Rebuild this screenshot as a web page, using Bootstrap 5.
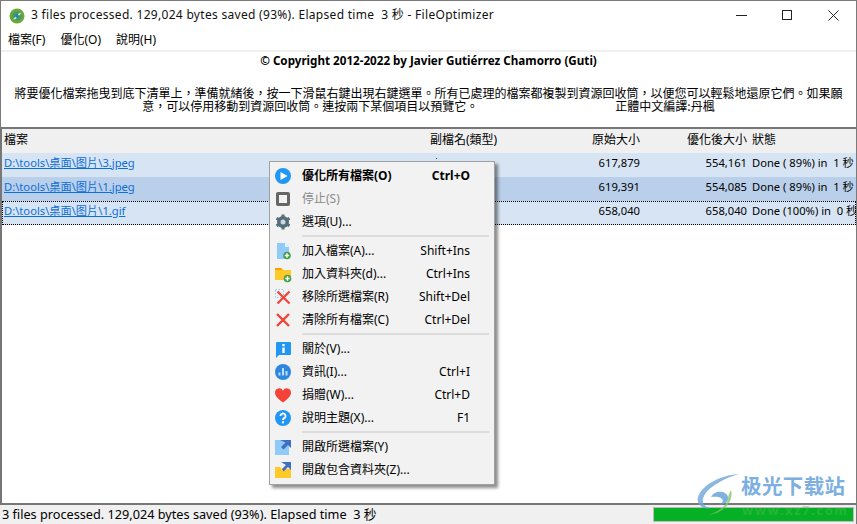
<!DOCTYPE html>
<html lang="zh-Hant">
<head>
<meta charset="utf-8">
<title>FileOptimizer</title>
<link href="https://cdn.jsdelivr.net/npm/bootstrap@5.3.0/dist/css/bootstrap.min.css" rel="stylesheet">
<style>
html,body{height:100%;margin:0;overflow:hidden;background:#fff}
body{font-family:"Noto Sans","Noto Sans CJK TC",sans-serif;font-size:11px;color:#000;line-height:1.2}
.win{height:524px;width:857px;border:1px solid #7a7a7a;border-bottom:0;position:relative;background:#fff}
.titlebar{height:29px;font-size:12px;padding-left:8px;gap:6px;color:#111}
.titlebar .ttl{letter-spacing:.3px;white-space:pre}
.winbtns{margin-left:auto}
.winbtn{width:46px;height:29px}
.menubar{height:20px;padding-left:7px;gap:15px;font-size:12px;border-bottom:2px solid #f0f0f0;box-sizing:content-box}
.notice{height:77px;border-bottom:2px solid #777;text-align:center;color:#000}
.copy{font-weight:700;padding-top:2px;height:28px;font-size:11.65px;line-height:14px}
.para{font-family:"Noto Sans CJK TC",sans-serif;font-size:12px;line-height:13px;white-space:pre;padding-top:6px}
.listwrap{border-left:2px solid #777;margin-left:-1px}
.hdr{height:24px;background:#f0f0f0;font-size:12px;padding-bottom:2px}
.hdr,.frow{display:grid;grid-template-columns:428px 110px 100px 107px 1fr;align-items:center}
.hdr>div:first-child,.frow>div:first-child{padding-left:2px}
.num{text-align:right}
.last{padding-left:5px;white-space:pre}
.frow .last{overflow:hidden}
.frow{height:24px;background:#d6e4f3;padding-bottom:5px;font-size:11.2px}
.frow.sel{background:#b9cfea}
.frow.foc{outline:1px dotted #000;outline-offset:-1px}
.frow a{color:#0d6fd8}
.jdot{width:1px;height:1px;background:#1a3a6a;align-self:start;margin:5px 0 0 6px}
.gap-fill{flex:1}
.statusline{height:21px;border-top:2px solid #777;background:#f0f0f0;padding-left:2px;font-size:12.7px;position:relative;z-index:1;margin-left:-1px}
.stxt{white-space:pre}
.gauge{width:201px;height:15px;margin-left:auto;margin-right:2px;border:1px solid #bcbcbc;background:#06b025}
.ctx{position:absolute;left:268px;top:160px;width:226px;height:324px;background:#f2f2f2;border:1px solid #a0a0a0;box-shadow:3px 3px 3px rgba(0,0,0,.45);padding:2px 0;z-index:5;display:block;border-radius:0;min-width:0;margin:0;font-size:12px;color:#000}
.ctx .mi{height:23px;padding:2px 24px 0 4px;display:flex;align-items:center;color:#000;white-space:nowrap}
.ctx .mi .ic{width:18px;height:18px;margin:-2px 10px 0 0;flex:none;display:block}
.ctx .mi.b{font-weight:700}
.ctx .mi.dis{color:#8a8a8a}
.ctx .mi .sc{margin-left:auto}
.ctx .sep{height:6px;margin:0 5px 0 32px}
.ctx .sep::after{content:"";display:block;position:relative;top:2px;height:2px;background:#dcdcdc}
.wm{position:absolute;left:696px;top:472px;z-index:3;pointer-events:none}
.wmt{position:absolute;left:740px;top:473px;z-index:3;font-family:"Noto Sans CJK SC",sans-serif;font-weight:700;font-size:20.500px;line-height:22px;color:#7db0e0;letter-spacing:.4px;white-space:nowrap}
.wmu{position:absolute;left:741px;top:503px;z-index:3;font-weight:700;font-size:13px;line-height:13px;color:rgba(90,190,90,.4);white-space:nowrap;letter-spacing:1.6px}
</style>
</head>
<body>
<div class="win d-flex flex-column">
  <div class="titlebar d-flex align-items-center">
    <svg width="16" height="16" viewBox="0 0 16 16"><circle cx="8" cy="8" r="7.500" fill="#6aa83a"/><circle cx="8" cy="8" r="4.600" fill="#3f9a74"/><path d="M4.500 10.500 11 4.500l1 1.200-6.200 6z" fill="#cfe9c0"/><circle cx="8" cy="8" r="1.800" fill="#2f7f99"/></svg>
    <span class="ttl">3 files processed. 129,024 bytes saved (93%). Elapsed time  3 秒 - FileOptimizer</span>
    <div class="winbtns d-flex">
      <div class="winbtn d-flex align-items-center justify-content-center"><svg width="11" height="11"><path d="M0 5.500h11" stroke="#222"/></svg></div>
      <div class="winbtn d-flex align-items-center justify-content-center"><svg width="11" height="11"><rect x=".5" y=".5" width="9" height="9" fill="none" stroke="#222"/></svg></div>
      <div class="winbtn d-flex align-items-center justify-content-center"><svg width="11" height="11"><path d="M.5.5l10 10M10.500.5l-10 10" stroke="#222"/></svg></div>
    </div>
  </div>
  <div class="menubar d-flex align-items-center"><span>檔案(F)</span><span>優化(O)</span><span>說明(H)</span></div>
  <div class="notice">
    <div class="copy">© Copyright 2012-2022 by Javier Gutiérrez Chamorro (Guti)</div>
    <div class="para">將要優化檔案拖曳到底下清單上，準備就緒後，按一下滑鼠右鍵出現右鍵選單。所有已處理的檔案都複製到資源回收筒，以便您可以輕鬆地還原它們。如果願
意，可以停用移動到資源回收筒。連按兩下某個項目以預覽它。                                                   正體中文編譯:丹楓</div>
  </div>
  <div class="listwrap">
    <div class="hdr"><div>檔案</div><div>副檔名(類型)</div><div class="num">原始大小</div><div class="num">優化後大小</div><div class="last">狀態</div></div>
  </div>
  <div class="gap-fill listwrap">
    <div class="frow"><div><a href="#">D:\tools\桌面\图片\3.jpeg</a></div><div class="jdot"></div><div class="num">617,879</div><div class="num">554,161</div><div class="last">Done ( 89%) in  1 秒</div></div>
    <div class="frow sel"><div><a href="#">D:\tools\桌面\图片\1.jpeg</a></div><div></div><div class="num">619,391</div><div class="num">554,085</div><div class="last">Done ( 89%) in  1 秒</div></div>
    <div class="frow foc"><div><a href="#">D:\tools\桌面\图片\1.gif</a></div><div></div><div class="num">658,040</div><div class="num">658,040</div><div class="last">Done (100%) in  0 秒</div></div>
  </div>
  <div class="statusline d-flex align-items-center">
    <span class="stxt">3 files processed. 129,024 bytes saved (93%). Elapsed time  3 秒</span>
    <div class="gauge"></div>
  </div>

  <div class="ctx dropdown-menu show">
    <div class="mi b"><svg class="ic" viewBox="0 0 18 18"><circle cx="9" cy="9" r="8" fill="#2196f3"/><path d="M6.500 5v8l7-4z" fill="#fff"/></svg>優化所有檔案(O)<span class="sc">Ctrl+O</span></div>
    <div class="mi dis"><svg class="ic" viewBox="0 0 18 18"><rect x="2" y="2" width="14" height="14" rx="2" fill="#666"/><rect x="5" y="5" width="8" height="8" fill="#f2f2f2"/></svg>停止(S)</div>
    <div class="mi"><svg class="ic" viewBox="0 0 18 18"><g fill="#546e7a"><circle cx="9" cy="9" r="6"/><g stroke="#546e7a" stroke-width="3"><path d="M9 1.500v15M2.500 5.250l13 7.500M2.500 12.750l13-7.500"/></g></g><circle cx="9" cy="9" r="2.500" fill="#cfd8dc"/></svg>選項(U)...</div>
    <div class="sep"></div>
    <div class="mi"><svg class="ic" viewBox="0 0 18 18"><path d="M3 1h8l4 4v12H3z" fill="#90caf9"/><path d="M11 1l4 4h-4z" fill="#e3f2fd"/><circle cx="13" cy="13.500" r="3.800" fill="#43a047"/><path d="M13 11.300v4.400M10.800 13.500h4.400" stroke="#fff" stroke-width="1.400"/></svg>加入檔案(A)...<span class="sc">Shift+Ins</span></div>
    <div class="mi"><svg class="ic" viewBox="0 0 18 18"><path d="M1 3h6l2 2h8v10H1z" fill="#ffca28"/><path d="M1 3h6l2 2H1z" fill="#ffa000"/><circle cx="13.500" cy="13.500" r="3.800" fill="#43a047"/><path d="M13.500 11.300v4.400M11.300 13.500h4.400" stroke="#fff" stroke-width="1.400"/></svg>加入資料夾(d)...<span class="sc">Ctrl+Ins</span></div>
    <div class="mi"><svg class="ic" viewBox="0 0 18 18"><rect x="1.500" y="1.500" width="8" height="8" fill="none" stroke="#90caf9" stroke-dasharray="1.500 1.500"/><path d="M3.500 3.500l12 12M15.500 3.500l-12 12" stroke="#f44336" stroke-width="2.200"/></svg>移除所選檔案(R)<span class="sc">Shift+Del</span></div>
    <div class="mi"><svg class="ic" viewBox="0 0 18 18"><path d="M3 3l12 12M15 3L3 15" stroke="#f44336" stroke-width="2.400"/></svg>清除所有檔案(C)<span class="sc">Ctrl+Del</span></div>
    <div class="sep"></div>
    <div class="mi"><svg class="ic" viewBox="0 0 18 18"><path d="M2 3a1 1 0 0 1 1-1h13a1 1 0 0 1 1 1v11a1 1 0 0 1-1 1H5l-3 3z" fill="#2196f3"/><rect x="8.300" y="4" width="2.400" height="2.200" fill="#fff"/><rect x="8.300" y="7.500" width="2.400" height="5.500" fill="#fff"/></svg>關於(V)...</div>
    <div class="mi"><svg class="ic" viewBox="0 0 18 18"><circle cx="9" cy="9" r="8" fill="#2e86de"/><path d="M5.500 9.500v3M9 5v7.500M12.500 8v4.500" stroke="#bbdefb" stroke-width="2"/></svg>資訊(I)...<span class="sc">Ctrl+I</span></div>
    <div class="mi"><svg class="ic" viewBox="0 0 18 18"><path d="M9 16.500C3 12 1 9.500 1 6.500A4.200 4.200 0 0 1 9 4.800 4.200 4.200 0 0 1 17 6.500c0 3-2 5.500-8 10z" fill="#f44336"/></svg>捐贈(W)...<span class="sc">Ctrl+D</span></div>
    <div class="mi"><svg class="ic" viewBox="0 0 18 18"><circle cx="9" cy="9" r="8" fill="#2196f3"/><path d="M6.500 7a2.500 2.500 0 1 1 3.800 2.100c-.9.600-1.300 1-1.300 2" fill="none" stroke="#fff" stroke-width="1.900"/><rect x="8" y="12.300" width="2" height="2" fill="#fff"/></svg>說明主題(X)...<span class="sc">F1</span></div>
    <div class="sep"></div>
    <div class="mi"><svg class="ic" viewBox="0 0 18 18"><path d="M1 2h14v15H1z" fill="#90caf9"/><path d="M6 2h11v8l-3-3-4.500 4.500L7 9l4.500-4.500z" fill="#3f6fc4"/></svg>開啟所選檔案(Y)</div>
    <div class="mi"><svg class="ic" viewBox="0 0 18 18"><path d="M1 6h5l2 2h9v9H1z" fill="#ffca28"/><path d="M7 1h10v8l-3-3-4.500 4.500L8 8l4-4z" fill="#3f6fc4"/></svg>開啟包含資料夾(Z)...</div>
  </div>

  <svg class="wm" width="44" height="44" viewBox="0 0 44 44"><path d="M42 1C26 2 6 10 1 24c-2 7 5 13 12 11-6-1-9-6-6-12C11 14 28 5 42 1z" fill="#6ea5d8" opacity=".8"/><path d="M14 24c4-8 16-6 17 0 1 5-5 9-9 7 3 0 5-3 3-5-3-3-8-2-11-2z" fill="#5f9ed6" opacity=".8"/><path d="M34 17c3 10-6 23-22 25 8-3 18-9 19-16 0-3 1-6 3-9z" fill="#7cc36a" opacity=".75"/></svg>
  <div class="wmt">极光下载站</div>
  <div class="wmu">www.xz7.com</div>
</div>
</body>
</html>
